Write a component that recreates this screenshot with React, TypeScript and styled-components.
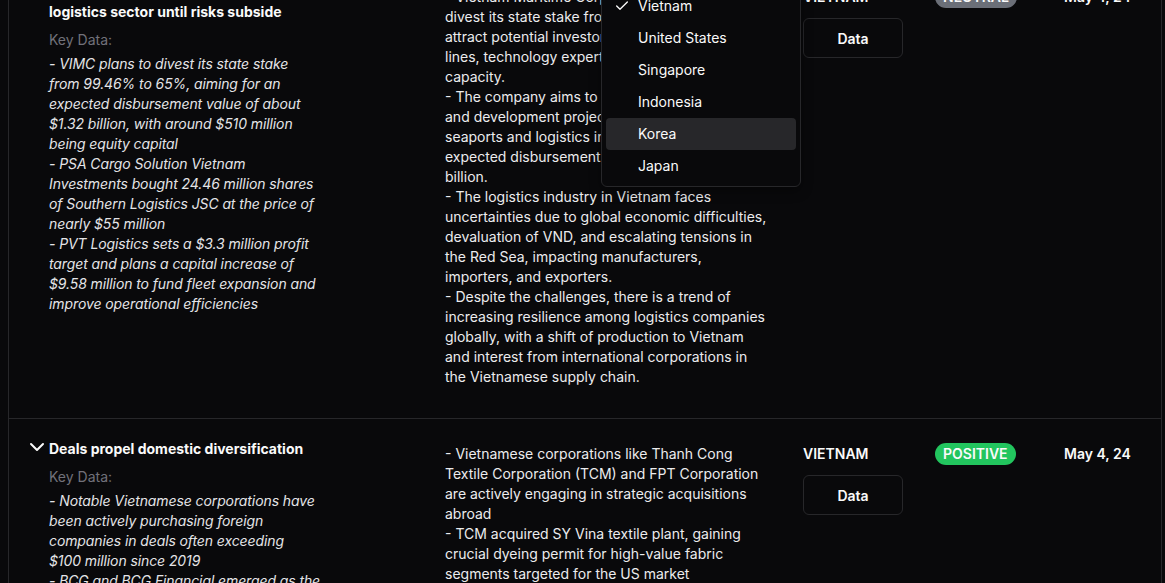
import React from 'react';
import styled, { createGlobalStyle } from 'styled-components';
import { Check } from 'lucide-react';

type Sentiment = 'neutral' | 'positive';

interface NewsRow {
  title: string;
  keyData: string;
  summary: string;
  country: string;
  sentiment: Sentiment;
  date: string;
}

const rows: NewsRow[] = [
  {
    title: "Investors cautious on Vietnam's logistics sector until risks subside",
    keyData:
      '- VIMC plans to divest its state stake from 99.46% to 65%, aiming for an expected disbursement value of about $1.32 billion, with around $510 million being equity capital\n- PSA Cargo Solution Vietnam Investments bought 24.46 million shares of Southern Logistics JSC at the price of nearly $55 million\n- PVT Logistics sets a $3.3 million profit target and plans a capital increase of $9.58 million to fund fleet expansion and improve operational efficiencies',
    summary:
      '- Vietnam Maritime Corporation (VIMC) plans to divest its state stake from 99.46% to 65% to attract potential investors with large shipping lines, technology expertise, and financial capacity.\n- The company aims to prioritize key investment and development projects, with emphasis on seaports and logistics infrastructure, with an expected disbursement value of around $1.32 billion.\n- The logistics industry in Vietnam faces uncertainties due to global economic difficulties, devaluation of VND, and escalating tensions in the Red Sea, impacting manufacturers, importers, and exporters.\n- Despite the challenges, there is a trend of increasing resilience among logistics companies globally, with a shift of production to Vietnam and interest from international corporations in the Vietnamese supply chain.',
    country: 'VIETNAM',
    sentiment: 'neutral',
    date: 'May 4, 24',
  },
  {
    title: 'Deals propel domestic diversification',
    keyData:
      '- Notable Vietnamese corporations have been actively purchasing foreign companies in deals often exceeding $100\u00a0million since 2019\n- BCG and BCG Financial emerged as the largest shareholders of Tracodi and Gia Lai Electricity',
    summary:
      '- Vietnamese corporations like Thanh Cong Textile Corporation (TCM) and FPT Corporation are actively engaging in strategic acquisitions abroad\n- TCM acquired SY Vina textile plant, gaining crucial dyeing permit for high-value fabric segments targeted for the US market\n- FPT expanded its footprint through overseas software acquisitions.',
    country: 'VIETNAM',
    sentiment: 'positive',
    date: 'May 4, 24',
  },
];

const countries = ['Vietnam', 'United States', 'Singapore', 'Indonesia', 'Korea', 'Japan'];

const App: React.FC = () => {
  return (
    <>
      <GlobalStyle />
      <Page>
        <Table>
          {rows.map((row, i) => (
            <Row key={i}>
              <TitleCell>
                <TitleLine>
                  <Chevron width="16" height="16" viewBox="0 0 16 16">
                    <polyline points="2,3 8,9 14,3" />
                  </Chevron>
                  <Title>{row.title}</Title>
                </TitleLine>
                <KeyBlock>
                  <KeyLabel>Key Data:</KeyLabel>
                  <KeyText>{row.keyData}</KeyText>
                </KeyBlock>
              </TitleCell>
              <Cell>
                <Summary>{row.summary}</Summary>
              </Cell>
              <CountryCell>
                <Strong>{row.country}</Strong>
                <DataButton>Data</DataButton>
              </CountryCell>
              <Cell>
                <Badge $sentiment={row.sentiment}>{row.sentiment.toUpperCase()}</Badge>
              </Cell>
              <Cell>
                <Strong>{row.date}</Strong>
              </Cell>
            </Row>
          ))}
        </Table>

        <Dropdown>
          {countries.map((c) => (
            <Option key={c} $active={c === 'Korea'}>
              {c === 'Vietnam' && (
                <CheckMark>
                  <Check size={16} strokeWidth={2} />
                </CheckMark>
              )}
              {c}
            </Option>
          ))}
        </Dropdown>
      </Page>
    </>
  );
};

export default App;

const GlobalStyle = createGlobalStyle`
  html, body {
    margin: 0;
    padding: 0;
    background: #09090b;
    overflow: hidden;
  }
  body {
    font-family: Inter, "Noto Sans", sans-serif;
    font-size: 14px;
    line-height: 20px;
    color: #fafafa;
  }
`;

const Page = styled.div`
  position: relative;
  display: flow-root;
  margin-left: 8px;
  width: 1154px;
`;

/* the list is scrolled: first row starts above the viewport */
const Table = styled.div`
  margin-top: -38px;
  border-left: 1px solid #27272a;
  border-right: 1px solid #27272a;
`;

const Row = styled.div`
  display: grid;
  grid-template-columns: 420px 358px 132px 129px 1fr;
  border-bottom: 1px solid #27272a;
`;

const Cell = styled.div`
  padding: 25px 16px 31px;
`;

const TitleCell = styled.div`
  padding: 20px 16px 31px 20px;
`;

const TitleLine = styled.div`
  display: flex;
  align-items: center;
  gap: 4px;
`;

const Chevron = styled.svg`
  flex: none;
  align-self: flex-start;
  margin-top: 2px;
  fill: none;
  stroke: #fafafa;
  stroke-width: 2;
  stroke-linecap: round;
  stroke-linejoin: round;
`;

const Title = styled.div`
  width: 272px;
  font-weight: 700;
  color: #fafafa;
`;

const KeyBlock = styled.div`
  margin-left: 20px;
  margin-top: 8px;
  width: 272px;
`;

const KeyLabel = styled.div`
  color: #71717a;
  margin-bottom: 4px;
`;

const KeyText = styled.div`
  font-style: italic;
  letter-spacing: -0.1px;
  color: #e4e4e7;
  white-space: pre-line;
`;

const Summary = styled.div`
  color: #ececee;
  white-space: pre-line;
`;

const CountryCell = styled(Cell)`
  display: flex;
  flex-direction: column;
  align-items: flex-start;
  gap: 11px;
`;

const Strong = styled.span`
  font-weight: 600;
  color: #fafafa;
`;

const DataButton = styled.button`
  width: 100px;
  height: 40px;
  background: transparent;
  border: 1px solid #27272a;
  border-radius: 6px;
  color: #fafafa;
  font-family: inherit;
  font-size: 14px;
  font-weight: 600;
  cursor: pointer;
`;

const Badge = styled.span<{ $sentiment: Sentiment }>`
  display: inline-block;
  margin-top: -1px;
  padding: 1px 8px;
  border-radius: 999px;
  font-weight: 600;
  color: #fafafa;
  background: ${(p) => (p.$sentiment === 'positive' ? '#22c55e' : '#6b6f78')};
`;

const Dropdown = styled.div`
  position: absolute;
  top: -15px;
  left: 593px;
  width: 190px;
  padding: 4px;
  background: #09090b;
  border: 1px solid #27272a;
  border-radius: 6px;
  box-shadow: 0 4px 12px rgba(0, 0, 0, 0.4);
  z-index: 10;
`;

const Option = styled.div<{ $active?: boolean }>`
  position: relative;
  height: 32px;
  display: flex;
  align-items: center;
  padding-left: 32px;
  border-radius: 4px;
  color: #fafafa;
  background: ${(p) => (p.$active ? '#27272a' : 'transparent')};
`;

const CheckMark = styled.span`
  position: absolute;
  left: 8px;
  top: 8px;
  display: flex;
`;
